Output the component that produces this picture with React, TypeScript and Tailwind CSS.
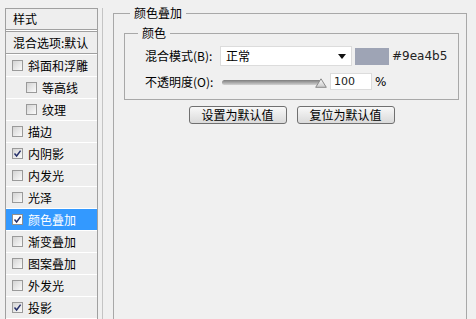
import React from "react";

type Item = { t: string; c?: boolean; sub?: boolean; sel?: boolean };

const items: Item[] = [
  { t: "斜面和浮雕" },
  { t: "等高线", sub: true },
  { t: "纹理", sub: true },
  { t: "描边" },
  { t: "内阴影", c: true },
  { t: "内发光" },
  { t: "光泽" },
  { t: "颜色叠加", c: true, sel: true },
  { t: "渐变叠加" },
  { t: "图案叠加" },
  { t: "外发光" },
  { t: "投影", c: true },
];

function Check({ checked, white }: { checked?: boolean; white?: boolean }) {
  return (
    <span
      className={
        white
          ? "w-[11px] h-[11px] border border-[#8f8f8f] bg-white flex items-center justify-center shrink-0"
          : "w-[11px] h-[11px] border border-[#9a9a9a] bg-linear-to-br from-[#d4d4d4] to-[#fbfbfb] flex items-center justify-center shrink-0"
      }
    >
      {checked && (
        <svg width="9" height="9" viewBox="0 0 9 9">
          <path d="M1.5 4.6 L3.6 7 L7.6 1.6" stroke="#26306a" strokeWidth="1.5" fill="none" />
        </svg>
      )}
    </span>
  );
}

export default function App() {
  return (
    <div className="w-[476px] h-[319px] bg-[#f0f0f0] flex overflow-hidden font-['Noto_Sans_CJK_SC',sans-serif] text-[12px] text-black leading-[16px]">
      <div className="flex pt-[8px] pl-[5px] shrink-0">
        <div className="w-[93px] border-l border-t border-r border-[#a0a0a0] bg-[#eeeeee] flex flex-col">
          <div className="h-[21px] border-b border-[#a0a0a0] flex items-center pl-[7px]">样式</div>
          <div className="h-[2px] bg-white" />
          <div className="h-[23px] border-t border-b border-[#a0a0a0] flex items-center pl-[7px] whitespace-nowrap">
            混合选项:默认
          </div>
          <div className="h-px bg-white shrink-0" />
          {items.map((it) => (
            <div
              key={it.t}
              className={
                (it.sel ? "bg-[#3399ff] text-white " : "") +
                (it.sub ? "pl-[20px] " : "pl-[6px] ") +
                "h-[22px] shrink-0 border-b border-white flex items-center gap-[5px] whitespace-nowrap"
              }
            >
              <Check checked={it.c} white={it.sel} />
              <span>{it.t}</span>
            </div>
          ))}
        </div>
        <div className="w-[4px]" />
        <div className="w-px bg-[#c4c4c4]" />
      </div>

      <fieldset className="mt-[5px] ml-[10px] w-[354px] h-[340px] border border-[#a8a8a8] shrink-0 min-w-0">
        <legend className="ml-[16px] px-[4px] leading-[16px]">颜色叠加</legend>
        <div className="pl-[10px] pr-[7px] pt-[4px]">
          <fieldset className="border border-[#a8a8a8] min-w-0">
            <legend className="ml-[13px] px-[4px] leading-[16px]">颜色</legend>
            <div className="pl-[20px] pt-[5px] pb-[9px]">
              <div className="flex items-center h-[20px]">
                <span className="w-[75px] shrink-0 whitespace-nowrap">混合模式(B):</span>
                <div className="w-[132px] h-[20px] bg-white border border-[#dcdcdc] flex items-center justify-between pl-[5px] pr-[5px] shrink-0">
                  <span>正常</span>
                  <svg width="8" height="5" viewBox="0 0 8 5">
                    <path d="M0 0 L8 0 L4 5 Z" fill="#111" />
                  </svg>
                </div>
                <div className="ml-[3px] w-[34px] h-[17px] bg-[#9ea4b5] shrink-0" />
                <span className="ml-[3px] font-['DejaVu_Sans',sans-serif] text-[12px] text-[#222]">#9ea4b5</span>
              </div>
              <div className="flex items-center h-[17px] mt-[7px]">
                <span className="w-[75px] shrink-0 whitespace-nowrap">不透明度(O):</span>
                <div className="ml-[2px] w-[106px] h-[17px] relative flex items-center shrink-0">
                  <div className="w-[100px] h-[5px] rounded-full bg-linear-to-b from-[#7e7e7e] to-[#d2d2d2] mt-[1px]" />
                  <svg className="absolute left-[93px] top-[5px]" width="12" height="10" viewBox="0 0 12 10">
                    <defs>
                      <linearGradient id="tg" x1="0" y1="0" x2="0" y2="1">
                        <stop offset="0" stopColor="#ffffff" />
                        <stop offset="1" stopColor="#c8c8c8" />
                      </linearGradient>
                    </defs>
                    <path d="M6 0.8 L11.3 9.3 L0.7 9.3 Z" fill="url(#tg)" stroke="#8a8a8a" strokeWidth="1" />
                  </svg>
                </div>
                <div className="ml-[2px] w-[42px] h-[17px] bg-white border border-[#dcdcdc] flex items-center pl-[3px] shrink-0 font-['DejaVu_Sans',sans-serif] text-[11px] text-[#222]">
                  100
                </div>
                <span className="ml-[3px] font-['DejaVu_Sans',sans-serif] text-[12px]">%</span>
              </div>
            </div>
          </fieldset>
          <div className="mt-[6px] flex justify-center gap-[10px]">
            <div className="w-[98px] h-[18px] border border-[#707070] rounded-[3px] bg-linear-to-b from-[#f8f8f8] to-[#dadada] flex items-center justify-center">
              设置为默认值
            </div>
            <div className="w-[98px] h-[18px] border border-[#707070] rounded-[3px] bg-linear-to-b from-[#f8f8f8] to-[#dadada] flex items-center justify-center">
              复位为默认值
            </div>
          </div>
        </div>
      </fieldset>
    </div>
  );
}
